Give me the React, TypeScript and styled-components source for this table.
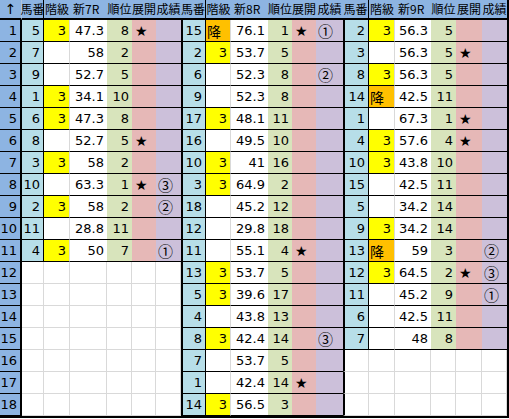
import React from 'react';
import styled, { createGlobalStyle, css } from 'styled-components';

const Global = createGlobalStyle`
  html, body { margin: 0; padding: 0; background: #ffffff; }
  body {
    font-family: "DejaVu Sans", "Noto Sans CJK JP", sans-serif;
    color: #000000;
  }
`;

type Row = [string, string, string, string, string, string];

const g1: Row[] = [
  ['5', '3', '47.3', '8', '★', ''],
  ['7', '', '58', '2', '', ''],
  ['9', '', '52.7', '5', '', ''],
  ['1', '3', '34.1', '10', '', ''],
  ['6', '3', '47.3', '8', '', ''],
  ['8', '', '52.7', '5', '★', ''],
  ['3', '3', '58', '2', '', ''],
  ['10', '', '63.3', '1', '★', '③'],
  ['2', '3', '58', '2', '', '②'],
  ['11', '', '28.8', '11', '', ''],
  ['4', '3', '50', '7', '', '①'],
];

const g2: Row[] = [
  ['15', '降', '76.1', '1', '★', '①'],
  ['2', '3', '53.7', '5', '', ''],
  ['6', '', '52.3', '8', '', '②'],
  ['9', '', '52.3', '8', '', ''],
  ['17', '3', '48.1', '11', '', ''],
  ['16', '', '49.5', '10', '', ''],
  ['10', '3', '41', '16', '', ''],
  ['3', '3', '64.9', '2', '', ''],
  ['18', '', '45.2', '12', '', ''],
  ['12', '', '29.8', '18', '', ''],
  ['11', '', '55.1', '4', '★', ''],
  ['13', '3', '53.7', '5', '', ''],
  ['5', '3', '39.6', '17', '', ''],
  ['4', '', '43.8', '13', '', ''],
  ['8', '3', '42.4', '14', '', '③'],
  ['7', '', '53.7', '5', '', ''],
  ['1', '', '42.4', '14', '★', ''],
  ['14', '3', '56.5', '3', '', ''],
];

const g3: Row[] = [
  ['2', '3', '56.3', '5', '', ''],
  ['3', '', '56.3', '5', '★', ''],
  ['8', '3', '56.3', '5', '', ''],
  ['14', '降', '42.5', '11', '', ''],
  ['1', '', '67.3', '1', '★', ''],
  ['4', '3', '57.6', '4', '★', ''],
  ['10', '3', '43.8', '10', '', ''],
  ['15', '', '42.5', '11', '', ''],
  ['5', '', '34.2', '14', '', ''],
  ['9', '3', '34.2', '14', '', ''],
  ['13', '降', '59', '3', '', '②'],
  ['12', '3', '64.5', '2', '★', '③'],
  ['11', '', '45.2', '9', '', '①'],
  ['6', '', '42.5', '11', '', ''],
  ['7', '', '48', '8', '', ''],
];

const groups = [
  { race: '新7R', rows: g1 },
  { race: '新8R', rows: g2 },
  { race: '新9R', rows: g3 },
];

const COLS = [22, 22, 26, 37, 25, 24, 25, 25, 25, 37, 24, 24, 27, 26, 26, 36, 25, 26, 25];

const C = {
  head: '#8db4e2',
  uma: '#b7dee8',
  yellow: '#ffff00',
  orange: '#ffc000',
  jun: '#d8e4bc',
  ten: '#e6b8b7',
  sei: '#ccc0da',
  grid: '#d9d9d9',
};

const Sheet = styled.div`
  display: grid;
  grid-template-columns: ${COLS.map((c) => `${c}px`).join(' ')};
  grid-template-rows: 20px repeat(18, 22px);
  width: 507px;
  border-right: 2px solid #000;
  border-bottom: 2px solid #000;
  font-size: 13px;
  line-height: 1;
`;

const Corner = styled.div`
  background: ${C.head};
  border-right: 1px solid #b0c4de;
  border-bottom: 2px solid #000;
  display: flex;
  align-items: center;
  justify-content: center;
  font-size: 14px;
`;

const HeadCell = styled.div<{ $divider?: boolean; $left?: boolean }>`
  background: ${C.head};
  border-bottom: 2px solid #000;
  ${(p) => p.$divider && css`border-right: 1px solid #000;`}
  display: flex;
  align-items: center;
  justify-content: ${(p) => (p.$left ? 'flex-start' : 'center')};
  padding-left: ${(p) => (p.$left ? '3px' : '0')};
  font-family: "Noto Sans CJK JP", "DejaVu Sans", sans-serif;
  font-size: 12px;
  white-space: nowrap;
  overflow: visible;
  box-sizing: border-box;
`;

const RowNum = styled.div`
  background: ${C.head};
  border-right: 2px solid #000;
  border-bottom: 1px solid #000;
  display: flex;
  align-items: center;
  justify-content: flex-end;
  padding-right: 3px;
  box-sizing: border-box;
`;

type Kind = 'uma' | 'kai' | 'val' | 'jun' | 'ten' | 'sei';

const Cell = styled.div<{ $kind: Kind; $fill?: string; $first?: boolean; $empty?: boolean }>`
  box-sizing: border-box;
  display: flex;
  align-items: center;
  white-space: nowrap;
  justify-content: flex-end;
  padding: 0 3px;
  background: ${(p) => p.$fill || '#fff'};
  border-bottom: 1px solid ${(p) => (p.$empty ? C.grid : '#000')};
  ${(p) => p.$first && css`border-left: 2px solid #000;`}
  ${(p) =>
    p.$empty
      ? css`border-right: 1px solid ${C.grid};`
      : p.$kind === 'uma'
      ? css`border-right: 1px solid #000;`
      : p.$kind === 'kai'
      ? css`border-right: 1px solid ${C.grid};`
      : ''}
  ${(p) => (p.$kind === 'ten' || p.$kind === 'sei') && css`justify-content: flex-start;`}
  ${(p) => p.$kind === 'ten' && css`padding-left: 3px; font-size: 14px;`}
  ${(p) => p.$kind === 'sei' && css`padding-left: 2px; font-family: "Noto Sans CJK JP", sans-serif; font-size: 15px;`}
`;

const KaiText = styled.span<{ $cjk?: boolean }>`
  ${(p) => p.$cjk && css`font-family: "Noto Sans CJK JP", sans-serif; font-size: 14px;`}
`;

const fillFor = (kind: Kind, v: string): string => {
  switch (kind) {
    case 'uma':
      return C.uma;
    case 'kai':
      return v === '3' ? C.yellow : v === '降' ? C.orange : '#fff';
    case 'jun':
      return C.jun;
    case 'ten':
      return C.ten;
    case 'sei':
      return C.sei;
    default:
      return '#fff';
  }
};

const kinds: Kind[] = ['uma', 'kai', 'val', 'jun', 'ten', 'sei'];
const heads = ['馬番', '階級', '', '順位', '展開', '成績'];

export default function App() {
  const cells: React.ReactNode[] = [];
  cells.push(<Corner key="corner">↑</Corner>);
  groups.forEach((g, gi) => {
    kinds.forEach((k, ki) => {
      cells.push(
        <HeadCell key={`h${gi}-${ki}`} $divider={k === 'uma'} $left={k === 'val'}>
          {k === 'val' ? g.race : heads[ki]}
        </HeadCell>
      );
    });
  });
  for (let r = 0; r < 18; r++) {
    cells.push(<RowNum key={`rn${r}`}>{r + 1}</RowNum>);
    groups.forEach((g, gi) => {
      const row = g.rows[r];
      kinds.forEach((k, ki) => {
        const v = row ? row[ki] : '';
        const first = ki === 0 && gi > 0;
        if (!row) {
          cells.push(<Cell key={`c${r}-${gi}-${ki}`} $kind={k} $empty $first={first} />);
          return;
        }
        cells.push(
          <Cell
            key={`c${r}-${gi}-${ki}`}
            $kind={k}
            $fill={fillFor(k, v)}
            $first={first}
            style={k === 'kai' && v === '降' ? { justifyContent: 'flex-start', paddingLeft: 1 } : undefined}
          >
            {k === 'kai' ? <KaiText $cjk={v === '降'}>{v}</KaiText> : v}
          </Cell>
        );
      });
    });
  }
  return (
    <>
      <Global />
      <Sheet>{cells}</Sheet>
    </>
  );
}
